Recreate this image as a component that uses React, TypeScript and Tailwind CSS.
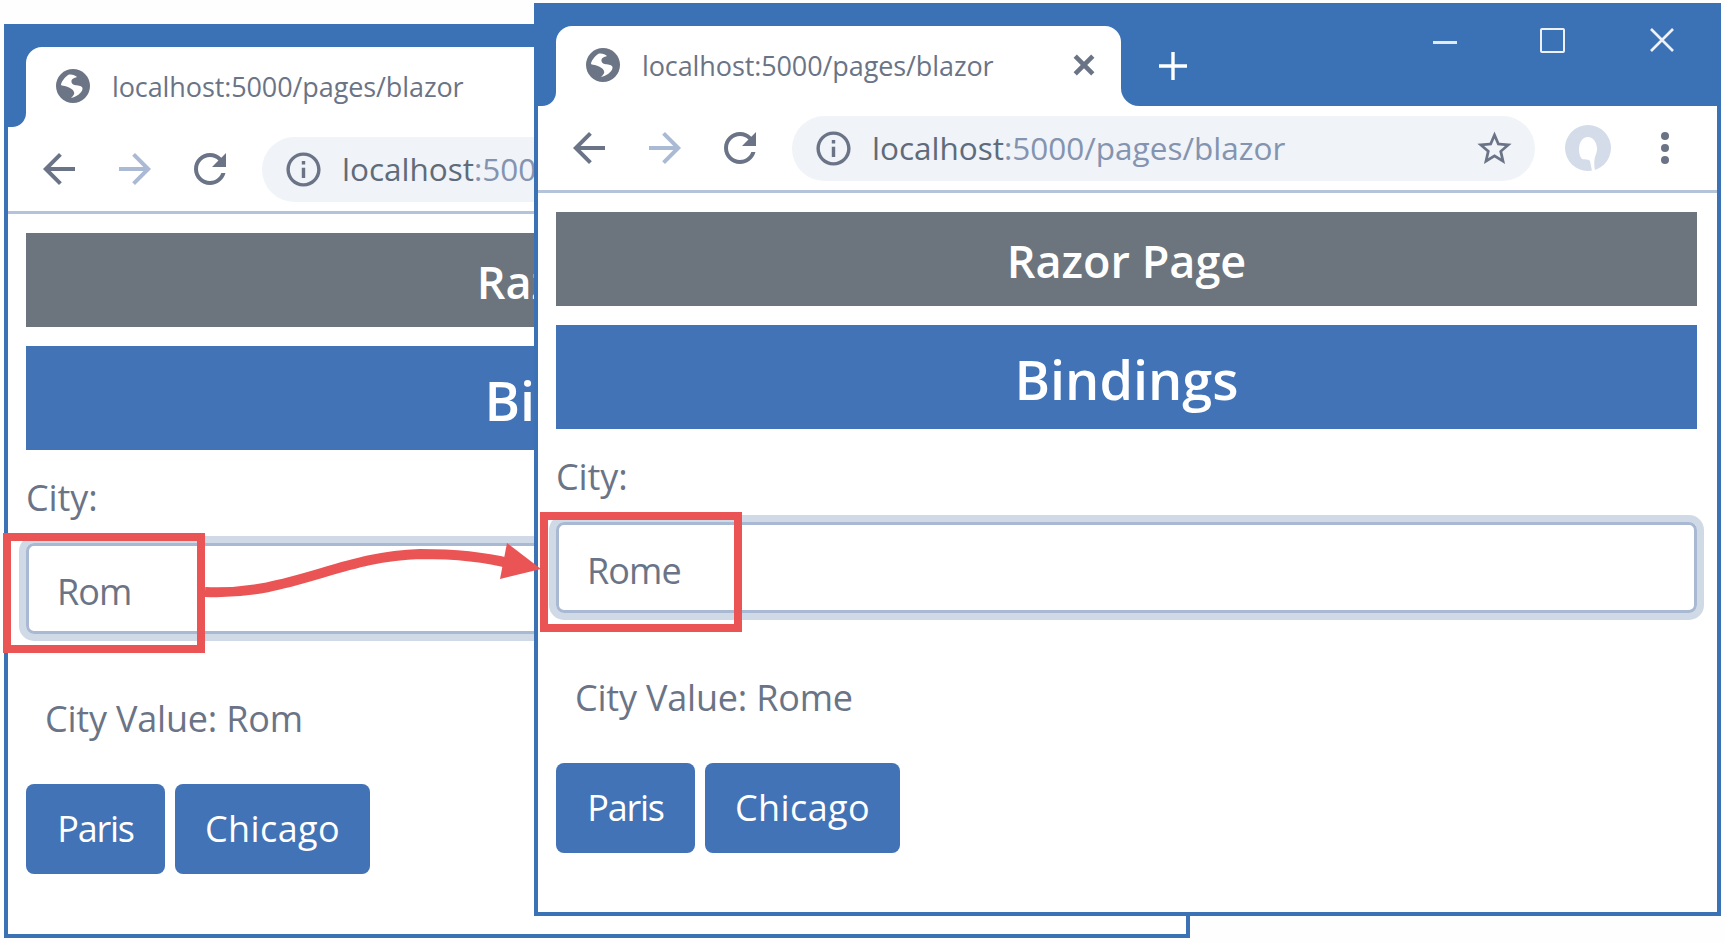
import React from "react";

type WindowProps = {
  city: string;
  className: string;
};

function MaterialIcon({ d, className }: { d: string; className: string }) {
  return (
    <svg viewBox="0 0 24 24" fill="currentColor" className={className}>
      <path d={d} />
    </svg>
  );
}

const arrowBack = "M20 11H7.83l5.59-5.59L12 4l-8 8 8 8 1.41-1.41L7.83 13H20v-2z";
const arrowForward = "M4 11h12.17l-5.59-5.59L12 4l8 8-8 8-1.41-1.41L16.17 13H4v-2z";
const refresh =
  "M17.65 6.35C16.2 4.9 14.21 4 12 4c-4.42 0-7.99 3.58-7.99 8s3.57 8 7.99 8c3.73 0 6.84-2.55 7.73-6h-2.08c-.82 2.33-3.04 4-5.65 4-3.31 0-6-2.69-6-6s2.69-6 6-6c1.66 0 3.14.69 4.22 1.78L13 11h7V4l-2.35 2.35z";
const info =
  "M11 7h2v2h-2zm0 4h2v6h-2zm1-9C6.48 2 2 6.48 2 12s4.48 10 10 10 10-4.48 10-10S17.52 2 12 2zm0 18c-4.41 0-8-3.59-8-8s3.59-8 8-8 8 3.59 8 8-3.59 8-8 8z";
const star =
  "M22 9.24l-7.19-.62L12 2 9.19 8.63 2 9.24l5.46 4.73L5.82 21 12 17.27 18.18 21l-1.63-7.03L22 9.24zM12 15.4l-3.76 2.27 1-4.28-3.32-2.88 4.38-.38L12 6.1l1.71 4.04 4.38.38-3.32 2.88 1 4.28L12 15.4z";

function Globe() {
  return (
    <svg viewBox="0 0 34 34" className="w-[34px] h-[34px] shrink-0">
      <circle cx="17" cy="17" r="17" fill="#6c7585" />
      <path
        d="M12 6 C15 5 19 6 21 8 C18 9 15 10 15.5 13 C16 16 19 16 22 16.5 C25 17 27 18 26.5 20 C26 24 20 28 15 29 C17 27 19 25 18 23 C17 20 14 19 10.5 17.5 C8 16.5 6 17 5 16 C5 13 9 8 12 6 Z"
        fill="#fff"
      />
    </svg>
  );
}

function Avatar() {
  return (
    <svg viewBox="0 0 46 46" className="w-[46px] h-[46px] shrink-0">
      <circle cx="23" cy="23" r="23" fill="#d3dce8" />
      <path
        d="M23 12 C17 12 14 18 14 24 C14 29 15 32 17 34 C20 35 24 34 25 36 L27 46 L30 46 C29 40 29 36 30 32 C31 29 32 27 32 24 C32 17 28 12 23 12 Z"
        fill="#fff"
      />
    </svg>
  );
}

function BrowserWindow({ city, className }: WindowProps) {
  return (
    <div className={`absolute flex flex-col bg-white border-4 border-[#3b71b5] overflow-hidden ${className}`}>
      {/* tab strip */}
      <div className="h-[19px] shrink-0 bg-[#3b71b5]" />
      <div className="flex h-[80px] shrink-0 bg-white">
        <div className="w-[18px] bg-[#3b71b5] rounded-br-[14px]" />
        <div className="w-[565px] bg-[#3b71b5]">
          <div className="flex items-center h-full bg-white rounded-t-[16px] pl-[30px] pr-[26px] pb-[2px] text-[#6a7486]">
            <Globe />
            <span className="ml-[22px] flex-1 pt-[3px] text-[27px] tracking-[-0.1px]">localhost:5000/pages/blazor</span>
            <svg viewBox="0 0 20 20" className="w-[22px] h-[22px]" fill="none" stroke="currentColor" strokeWidth="4.2">
              <path d="M2 2 L18 18 M18 2 L2 18" />
            </svg>
          </div>
        </div>
        <div className="relative flex-1 bg-[#3b71b5] rounded-bl-[18px]">
          <svg viewBox="0 0 28 28" className="absolute left-[38px] top-[26px] w-[28px] h-[28px]" stroke="#fff" strokeWidth="3.4">
            <path d="M14 0 V28 M0 14 H28" />
          </svg>
          <div className="absolute top-[2px] left-[312px] w-[244px] h-[27px]">
            <div className="absolute left-0 top-[13px] w-[24px] h-[3px] bg-[#e3e9f3]" />
            <div className="absolute left-[107px] top-0 w-[25px] h-[25px] border-[2.5px] border-[#eef2f8] rounded-[2px]" />
            <svg viewBox="0 0 24 24" className="absolute left-[217px] top-0 w-[24px] h-[24px]" stroke="#eef2f8" strokeWidth="2.6">
              <path d="M1 1 L23 23 M23 1 L1 23" />
            </svg>
          </div>
        </div>
      </div>

      {/* toolbar */}
      <div className="flex items-center h-[87px] shrink-0 border-b-[3px] border-[#b5c3da] text-[#6a7486] pl-[27px]">
        <MaterialIcon d={arrowBack} className="w-[48px] h-[48px] shrink-0" />
        <MaterialIcon d={arrowForward} className="w-[48px] h-[48px] shrink-0 ml-[28px] text-[#abbad4]" />
        <MaterialIcon d={refresh} className="w-[48px] h-[48px] shrink-0 ml-[27px]" />
        <div className="flex items-center w-[743px] h-[65px] ml-[28px] pl-[21px] pr-[20px] rounded-full bg-[#f0f3f7]">
          <MaterialIcon d={info} className="w-[41px] h-[41px] shrink-0" />
          <span className="ml-[18px] flex-1 text-[31.5px] text-[#8494b0]">
            <span className="text-[#5f6b7a]">localhost</span>:5000/pages/blazor
          </span>
          <MaterialIcon d={star} className="w-[41px] h-[41px] shrink-0" />
        </div>
        <div className="ml-[30px]">
          <Avatar />
        </div>
        <div className="flex flex-col gap-[4px] ml-[50px]">
          <span className="w-[8px] h-[8px] rounded-full bg-[#6a7486]" />
          <span className="w-[8px] h-[8px] rounded-full bg-[#6a7486]" />
          <span className="w-[8px] h-[8px] rounded-full bg-[#6a7486]" />
        </div>
      </div>

      {/* page */}
      <div className="flex flex-col w-[1141px] ml-[18px] pt-[19px] text-[#6a7486]">
        <div className="flex items-center justify-center h-[94px] pt-[2px] bg-[#6c757d] text-white text-[45px] leading-none font-semibold">
          Razor Page
        </div>
        <div className="flex items-center justify-center h-[104px] pt-[4px] mt-[19px] bg-[#4173b6] text-white text-[54px] leading-none font-semibold">
          Bindings
        </div>
        <div className="mt-[23px] h-[50px] leading-[50px] text-[36px] tracking-[-0.1px]">City:</div>
        <div className="flex items-center w-[1141px] h-[91px] mt-[20px] pl-[28px] pt-[6px] border-[3px] border-[#a9b8d3] rounded-lg shadow-[0_0_0_7px_#d0dae6] text-[36px] tracking-[-0.9px]">
          {city}
        </div>
        <div className="mt-[60px] ml-[19px] h-[50px] leading-[50px] text-[36px] tracking-[-0.2px]">City Value: {city}</div>
        <div className="flex gap-[10px] mt-[40px]">
          <button className="w-[139px] h-[90px] rounded-lg bg-[#4173b6] text-white text-[36px] tracking-[-1.2px]">Paris</button>
          <button className="w-[195px] h-[90px] rounded-lg bg-[#4173b6] text-white text-[36px] tracking-[0.4px]">Chicago</button>
        </div>
      </div>
    </div>
  );
}

export default function App() {
  return (
    <div className="relative w-[1725px] h-[943px] overflow-hidden bg-[#fefefe] font-['Open_Sans',sans-serif]">
      <BrowserWindow city="Rom" className="left-[4px] top-[24px] w-[1186px] h-[914px]" />
      <BrowserWindow city="Rome" className="left-[534px] top-[3px] w-[1187px] h-[913px]" />

      {/* callouts */}
      <div className="absolute left-[3px] top-[533px] w-[202px] h-[120px] border-[8px] border-[#ea5455]" />
      <div className="absolute left-[540px] top-[512px] w-[202px] h-[120px] border-[8px] border-[#ea5455]" />
      <svg viewBox="0 0 1725 943" className="absolute left-0 top-0 w-[1725px] h-[943px] pointer-events-none">
        <path d="M205 592 C290 596 340 556 420 554 C460 554 490 558 512 564" fill="none" stroke="#ea5455" strokeWidth="10" />
        <path d="M541 569 L507 543 L500 579 Z" fill="#ea5455" />
      </svg>
    </div>
  );
}
